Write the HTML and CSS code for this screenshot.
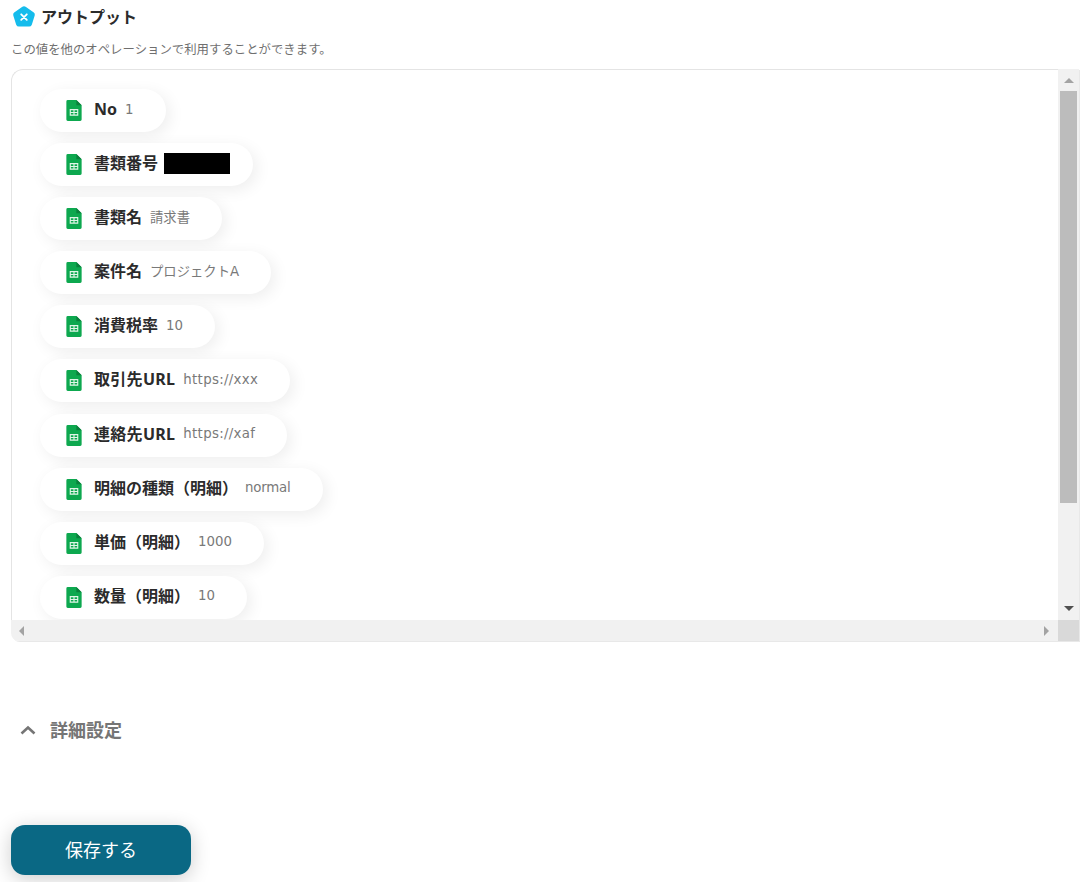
FILE: index.html
```html
<!DOCTYPE html>
<html lang="ja">
<head>
    <meta charset="UTF-8">
    <title>アウトプット</title>
    <link rel="stylesheet" href="styles.css">
</head>
<body>
    <svg class="defs" width="0" height="0">
        <symbol id="sheet" viewBox="0 0 16 22">
            <path d="M1.500 0H10.500L16 5.500V20.500A1.500 1.500 0 0 1 14.500 22H1.500A1.500 1.500 0 0 1 0 20.500V1.500A1.500 1.500 0 0 1 1.500 0Z" fill="#0da84f"/>
            <path d="M10.500 0L16 5.500H10.500Z" fill="#0a7f3c"/>
            <path d="M3.500 9.500H12.500V16.500H3.500ZM4.700 10.700V12.500H7.400V10.700ZM8.600 10.700V12.500H11.300V10.700ZM4.700 13.600V15.300H7.400V13.600ZM8.600 13.600V15.300H11.300V13.600Z" fill="#dff5e7" fill-rule="evenodd"/>
        </symbol>
    </svg>

    <div class="heading">
        <svg class="logo" viewBox="0 0 24 24" width="24" height="24">
            <path d="M12 1.200Q13 1.200 14 1.900L21.800 7.600Q23.300 8.800 22.700 10.600L19.800 19.700Q19.100 21.600 17.100 21.600H6.900Q4.900 21.600 4.200 19.700L1.300 10.600Q.7 8.800 2.200 7.600L10 1.900Q11 1.200 12 1.200Z" fill="#15bcec"/>
            <path d="M9.200 9.300L14.800 14.900M14.800 9.300L9.200 14.900" stroke="#fff" stroke-width="1.800" stroke-linecap="round"/>
        </svg>
        <h2>アウトプット</h2>
    </div>
    <p class="note">この値を他のオペレーションで利用することができます。</p>

    <div class="output-box">
        <div class="list">
            <div class="pill"><svg class="sheet"><use href="#sheet"/></svg><b>No</b><span>1</span></div>
            <div class="pill"><svg class="sheet"><use href="#sheet"/></svg><b>書類番号</b><i class="masked"></i></div>
            <div class="pill"><svg class="sheet"><use href="#sheet"/></svg><b>書類名</b><span>請求書</span></div>
            <div class="pill"><svg class="sheet"><use href="#sheet"/></svg><b>案件名</b><span>プロジェクトA</span></div>
            <div class="pill"><svg class="sheet"><use href="#sheet"/></svg><b>消費税率</b><span>10</span></div>
            <div class="pill wide"><svg class="sheet"><use href="#sheet"/></svg><b>取引先URL</b><span>https://xxx</span></div>
            <div class="pill wide"><svg class="sheet"><use href="#sheet"/></svg><b>連絡先URL</b><span>https://xaf</span></div>
            <div class="pill tight"><svg class="sheet"><use href="#sheet"/></svg><b>明細の種類（明細）</b><span>normal</span></div>
            <div class="pill"><svg class="sheet"><use href="#sheet"/></svg><b>単価（明細）</b><span>1000</span></div>
            <div class="pill"><svg class="sheet"><use href="#sheet"/></svg><b>数量（明細）</b><span>10</span></div>
        </div>
        <div class="vbar">
            <div class="arrow up"></div>
            <div class="thumb"></div>
            <div class="arrow down"></div>
        </div>
        <div class="hbar">
            <div class="arrow left"></div>
            <div class="arrow right"></div>
        </div>
        <div class="corner"></div>
    </div>

    <div class="advanced">
        <svg class="chevron" viewBox="0 0 16 10" width="16" height="10">
            <path d="M1.500 8.500L8 2.500L14.500 8.500" fill="none" stroke="#757575" stroke-width="2.600"/>
        </svg>
        <span>詳細設定</span>
    </div>

    <button class="save">保存する</button>
</body>
</html>
```

FILE: styles.css
```css
/* General Styles */
html, body {
    height: 882px;
    overflow: hidden;
}

body {
    margin: 0;
    padding: 0 13px 0 11px;
    box-sizing: border-box;
    background-color: #fff;
    color: #2b2b2b;
    font-family: "Noto Sans", "Noto Sans CJK JP", sans-serif;
}

.defs {
    display: block;
}

.heading {
    display: flex;
    align-items: center;
    gap: 5px;
    height: 24px;
    padding: 5px 0 0 1px;
}

.heading h2 {
    margin: 0;
    font-size: 16px;
    font-weight: 700;
    line-height: 24px;
    color: #2b2b2b;
}

.logo {
    flex: none;
}

.note {
    margin: 12px 0 0;
    font-size: 12.400px;
    line-height: 18px;
    color: #6f6f6f;
}

/* Output box */
.output-box {
    display: grid;
    grid-template-columns: 1fr 21px;
    grid-template-rows: 551px 21px;
    height: 572px;
    margin-top: 10px;
    border-radius: 12px 0 0 8px;
    box-shadow: 1px 1px 0 #e8e8e8;
}

.list {
    display: flex;
    flex-direction: column;
    align-items: flex-start;
    gap: 11.100px;
    min-width: 0;
    padding: 19px 0 0 28px;
    border-top: 1px solid #e4e4e4;
    border-left: 1px solid #e4e4e4;
    border-radius: 12px 0 0 0;
    overflow: hidden;
}

.pill {
    display: flex;
    flex: none;
    align-items: center;
    height: 43px;
    padding: 0 32px 0 26px;
    border-radius: 22px;
    background: #fff;
    box-shadow: 4px 4px 16px rgba(0, 0, 0, 0.07);
}

.sheet {
    flex: none;
    width: 16px;
    height: 21px;
    margin: 0 12px 0 0;
}

.pill b {
    margin-bottom: 3px;
    font-size: 16px;
    font-weight: 700;
    line-height: 24px;
    color: #2b2b2b;
    white-space: nowrap;
}

.pill span {
    margin: 0 0 2px 8px;
    font-family: "DejaVu Sans", "Noto Sans CJK JP", sans-serif;
    font-size: 13.330px;
    line-height: 20px;
    color: #797979;
    white-space: nowrap;
}

.pill.wide b,
.pill.wide span {
    letter-spacing: 0.3px;
}

.pill.tight span {
    margin-left: 7px;
    letter-spacing: -0.2px;
}

.masked {
    display: block;
    width: 66px;
    height: 21px;
    margin: 0 -9px 3px 6px;
    background: #000;
}

/* Scrollbars */
.vbar {
    display: flex;
    flex-direction: column;
    align-items: center;
    background: #f1f1f1;
}

.thumb {
    flex: none;
    width: 17px;
    height: 412px;
    background: #bcbcbc;
}

.hbar {
    display: flex;
    align-items: center;
    justify-content: space-between;
    padding: 0 9px 0 8px;
    border-radius: 0 0 0 8px;
    background: #f1f1f1;
}

.corner {
    background: #d9d9d9;
}

.arrow {
    flex: none;
    width: 0;
    height: 0;
    border-style: solid;
    border-color: transparent;
}

.arrow.up {
    margin: 9px 0 8px;
    border-width: 0 5px 5px;
    border-bottom-color: #a3a3a3;
}

.arrow.down {
    margin: auto 0 9px;
    border-width: 5px 5px 0;
    border-top-color: #505050;
}

.arrow.left {
    border-width: 5px 5px 5px 0;
    border-right-color: #a3a3a3;
}

.arrow.right {
    border-width: 5px 0 5px 5px;
    border-left-color: #a3a3a3;
}

/* Advanced settings */
.advanced {
    display: flex;
    align-items: center;
    gap: 14px;
    height: 24px;
    margin: 77px 0 0 9px;
    font-size: 18px;
    font-weight: 700;
    color: #757575;
}

.advanced span {
    margin-bottom: 2px;
}

.chevron {
    flex: none;
}

.save {
    display: block;
    width: 180px;
    height: 50px;
    margin-top: 83px;
    padding-bottom: 4px;
    border: none;
    border-radius: 14px;
    background-color: #0a6884;
    color: #fff;
    font-family: inherit;
    font-size: 18px;
    box-shadow: 0 4px 20px rgba(0, 0, 0, 0.2);
}
```
